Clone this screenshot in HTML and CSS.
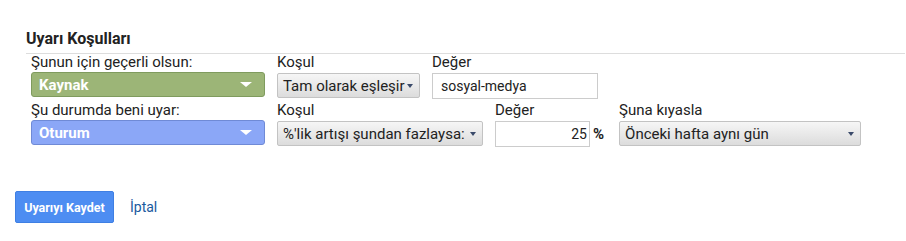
FILE: index.html
```html
<!DOCTYPE html>
<html lang="tr">
<head>
<meta charset="utf-8">
<link rel="stylesheet" href="styles.css">
</head>
<body>
<div class="page">
  <h2 class="title">Uyarı Koşulları</h2>
  <div class="rows">
    <div class="row">
      <div class="field f-dim">
        <div class="label">Şunun için geçerli olsun:</div>
        <div class="pill pill-green"><span>Kaynak</span><i class="caret white"></i></div>
      </div>
      <div class="field">
        <div class="label">Koşul</div>
        <div class="sel sel-1"><span>Tam olarak eşleşir</span><i class="caret"></i></div>
      </div>
      <div class="field">
        <div class="label">Değer</div>
        <div class="input input-1">sosyal-medya</div>
      </div>
    </div>
    <div class="row">
      <div class="field f-dim">
        <div class="label">Şu durumda beni uyar:</div>
        <div class="pill pill-blue"><span>Oturum</span><i class="caret white"></i></div>
      </div>
      <div class="field">
        <div class="label">Koşul</div>
        <div class="sel sel-2"><span>%'lik artışı şundan fazlaysa:</span><i class="caret"></i></div>
      </div>
      <div class="field">
        <div class="label">Değer</div>
        <div class="val"><div class="input input-2">25</div><b class="pct">%</b></div>
      </div>
      <div class="field">
        <div class="label">Şuna kıyasla</div>
        <div class="sel sel-3"><span>Önceki hafta aynı gün</span><i class="caret"></i></div>
      </div>
    </div>
  </div>
  <div class="actions">
    <button class="btn">Uyarıyı Kaydet</button>
    <a class="link">İptal</a>
  </div>
</div>
</body>
</html>
```
FILE: styles.css
```css
html, body { margin: 0; padding: 0; background: #fff; }
body { font-family: Roboto, "Liberation Sans", Arial, sans-serif; color: #222; font-size: 15px; }
.page { padding: 29px 0 0 26px; width: 879px; }
.title {
  margin: 0; font-size: 16px; font-weight: 700; color: #222;
  line-height: 19px; padding-bottom: 5px; border-bottom: 1px solid #ddd;
}
.rows { padding-left: 5px; padding-top: 0; }
.row { display: flex; gap: 12px; margin-bottom: 1px; }
.field { display: flex; flex-direction: column; }
.label { line-height: 17px; height: 17px; color: #222; font-size: 15px; white-space: nowrap; }
.f-dim { width: 234px; }
.pill {
  height: 23px; border-radius: 3px; display: flex; align-items: center;
  justify-content: space-between; padding: 0 12px 0 7px; color: #fff;
  font-weight: 700; font-size: 15px; margin-top: 1px; margin-bottom: 4px;
}
.pill-green { background: #9cb577; border: 1px solid #7f9b5e; }
.pill-blue { background: #8ba7f7; border: 1px solid #6f8ad6; }
.caret {
  width: 0; height: 0; border-left: 3.5px solid transparent; border-right: 3.5px solid transparent;
  border-top: 4px solid #3a4a6a; display: inline-block;
}
.caret.white { border-left-width: 6px; border-right-width: 6px; border-top: 5px solid #fff; }
.sel {
  height: 25px; box-sizing: border-box; margin-top: 2px;
  border: 1px solid #c3c3c3; border-radius: 2px;
  background: linear-gradient(#f6f6f6, #dcdcdc);
  display: flex; align-items: center; justify-content: space-between;
  padding: 0 6px 0 5px; font-size: 15px; color: #222; white-space: nowrap;
}
.sel-1 { width: 143px; }
.sel-2 { width: 206px; }
.sel-3 { width: 242px; }
.input {
  height: 26px; box-sizing: border-box; border: 1px solid #ccc; margin-top: 2px;
  font-size: 14px; line-height: 24px; padding: 0 8px; color: #222;
}
.input-1 { width: 166px; }
.input-2 { width: 95px; text-align: right; padding-right: 2px; }
.val { display: flex; align-items: center; }
.pct { font-size: 15px; margin-left: 3px; margin-right: 3px; margin-top: 2px; }
.actions { display: flex; align-items: center; gap: 16px; margin-top: 42px; margin-left: -11px; }
.btn {
  width: 99px; height: 32px; background: #4d8df2; color: #fff; border: 1px solid #3f7fe3;
  border-radius: 2px; font-family: Roboto, "Liberation Sans", sans-serif;
  font-weight: 700; font-size: 12.5px; padding: 0;
}
.link { color: #1a5a9e; font-size: 14px; }
```
